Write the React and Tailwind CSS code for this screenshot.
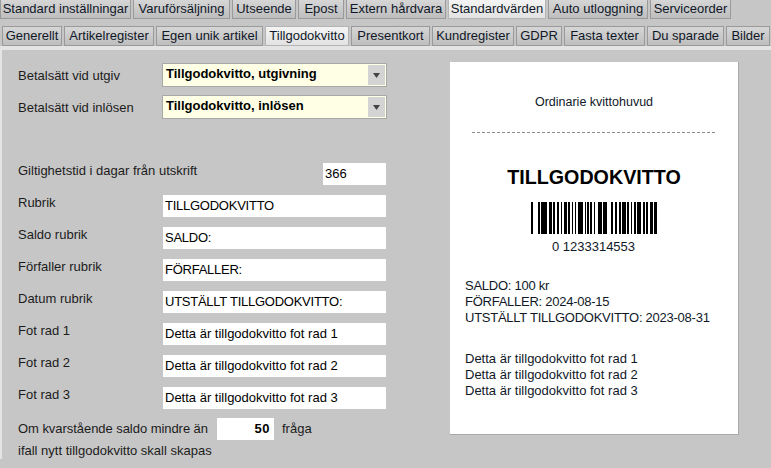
const top = [["Standard inställningar",131,0],["Varuförsäljning",97,0],["Utseende",64,0],["Epost",46,0],["Extern hårdvara",100,0],["Standardvärden",98,1],["Auto utloggning",100,0],["Serviceorder",81,0]];
const sub = [["Generellt",60,0],["Artikelregister",90,0],["Egen unik artikel",107,0],["Tillgodokvitto",84,1],["Presentkort",79,0],["Kundregister",82,0],["GDPR",46,0],["Fasta texter",81,0],["Du sparade",77,0],["Bilder",44,0]];

function Tab({ t, w, a, extra }) {
  return (
    <div style={{ width: w }} className={`h-full shrink-0 flex items-center justify-center border whitespace-nowrap ${extra} ${a ? "bg-gradient-to-b from-[#f4f4f4] to-[#e2e2e2] border-[#b4b4b4]" : "bg-gradient-to-b from-[#d6d6d6] to-[#bebebe] border-[#9a9a9a]"}`}>
      {t}
    </div>
  );
}

function Field({ label, value, caps }) {
  return (
    <div className="h-[22px] flex items-start mb-[10px]">
      <div className="w-[145px] leading-[16px] text-[#1c1c1c]">{label}</div>
      <div className={`w-[223px] h-[22px] bg-white flex items-center pl-[2px] text-black ${caps ? "tracking-[-0.25px]" : ""}`}>{value}</div>
    </div>
  );
}

function Select({ label, value }) {
  return (
    <div className="h-[24px] flex items-center mb-[8px]">
      <div className="w-[144px] text-[#1c1c1c] mt-[2px]">{label}</div>
      <div className="w-[225px] h-[24px] bg-[#ffffe6] border border-[#a8a8a8] flex items-center pl-[3px] font-bold text-black">
        <span className="flex-1 -mt-[2px]">{value}</span>
        <div className="w-[17px] h-[20px] mr-[1px] bg-[#d4d4d4] flex items-center justify-center">
          <svg width="7" height="5" viewBox="0 0 7 5"><path d="M0 0h7L3.5 5z" fill="#444" /></svg>
        </div>
      </div>
    </div>
  );
}

const bars = [2,5,2,1,6,2,3,1,2,2,2,2,1,2,3,1,2,2,1,2,1,2,5,2,1,1,2,1,2,2,1,3,4,1,4,4,2,2,2,2,2,1,4,1,2,2,1,2,2,1,4,2,2,1,2,2,3,1,3];

function Barcode() {
  let x = 0;
  const rects = [];
  bars.forEach((b, i) => {
    if (i % 2 === 0) rects.push(<rect key={i} x={x} y="0" width={b} height="32" fill="#000" />);
    x += b;
  });
  return <svg width="126" height="32" viewBox="0 0 126 32" className="block">{rects}</svg>;
}

export default function App() {
  return (
    <div className="w-[771px] h-[468px] overflow-hidden bg-[#c6c6c6] text-[13px] text-[#101828]" style={{ fontFamily: '"Liberation Sans", Arial, sans-serif' }}>
      <div className="flex gap-[2px] h-[19px]">
        {top.map(([t, w, a]) => <Tab key={t} t={t} w={w} a={a} extra="border-t-0" />)}
      </div>
      <div className="h-[7px]" />
      <div className="flex gap-[2px] pl-[2px] h-[20px]">
        {sub.map(([t, w, a]) => <Tab key={t} t={t} w={w} a={a} extra="" />)}
      </div>
      <div className="h-[4px] bg-[#e4e4e4]" />
      <div className="pl-[2px] flex bg-gradient-to-r from-[#e4e4e4] from-[2px] to-[#c6c6c6] to-[2px]">
        <div className="w-[448px] shrink-0 pl-[16px] pt-[13px]">
          <Select label="Betalsätt vid utgiv" value="Tillgodokvitto, utgivning" />
          <Select label="Betalsätt vid inlösen" value="Tillgodokvitto, inlösen" />
          <div className="h-[36px]" />
          <div className="h-[22px] flex items-start mb-[10px]">
            <div className="w-[305px] leading-[16px] text-[#1c1c1c]">Giltighetstid i dagar från utskrift</div>
            <div className="w-[63px] h-[22px] bg-white flex items-center pl-[2px] text-black">366</div>
          </div>
          <Field caps label="Rubrik" value="TILLGODOKVITTO" />
          <Field caps label="Saldo rubrik" value="SALDO:" />
          <Field caps label="Förfaller rubrik" value="FÖRFALLER:" />
          <Field caps label="Datum rubrik" value="UTSTÄLLT TILLGODOKVITTO:" />
          <Field label="Fot rad 1" value="Detta är tillgodokvitto fot rad 1" />
          <Field label="Fot rad 2" value="Detta är tillgodokvitto fot rad 2" />
          <Field label="Fot rad 3" value="Detta är tillgodokvitto fot rad 3" />
          <div className="flex items-center h-[22px] -mt-[1px] text-[#1c1c1c]">
            <span className="w-[199px] tracking-[-0.05px]">Om kvarstående saldo mindre än</span>
            <div className="w-[57px] h-[22px] bg-white flex items-center justify-end pr-[4px] font-bold text-black tracking-[0.5px]">50</div>
            <span className="ml-[8px]">fråga</span>
          </div>
          <div className="mt-[3px] leading-[16px] text-[#1c1c1c]">ifall nytt tillgodokvitto skall skapas</div>
        </div>
        <div className="w-[289px] h-[373px] mt-[12px] bg-white border-r border-b border-[#a8a8a8] shrink-0 pl-[15px] pr-[16px]">
          <div className="pt-[33px] text-center leading-[14px] text-[12.5px] pl-[1px]">Ordinarie kvittohuvud</div>
          <div className="mt-[23px] border-t border-dashed border-[#8a8a8a] ml-[7px] mr-[7px]" />
          <div className="mt-[33px] text-center text-[19.7px] font-bold leading-[22px] text-black pl-[1px]">TILLGODOKVITTO</div>
          <div className="mt-[14px] flex justify-center"><Barcode /></div>
          <div className="mt-[5px] text-center leading-[16px]">0 1233314553</div>
          <div className="mt-[23px] leading-[16px] tracking-[-0.25px]">
            <div>SALDO: 100 kr</div>
            <div>FÖRFALLER: 2024-08-15</div>
            <div>UTSTÄLLT TILLGODOKVITTO: 2023-08-31</div>
          </div>
          <div className="mt-[25px] leading-[16px]">
            <div>Detta är tillgodokvitto fot rad 1</div>
            <div>Detta är tillgodokvitto fot rad 2</div>
            <div>Detta är tillgodokvitto fot rad 3</div>
          </div>
        </div>
      </div>
    </div>
  );
}
